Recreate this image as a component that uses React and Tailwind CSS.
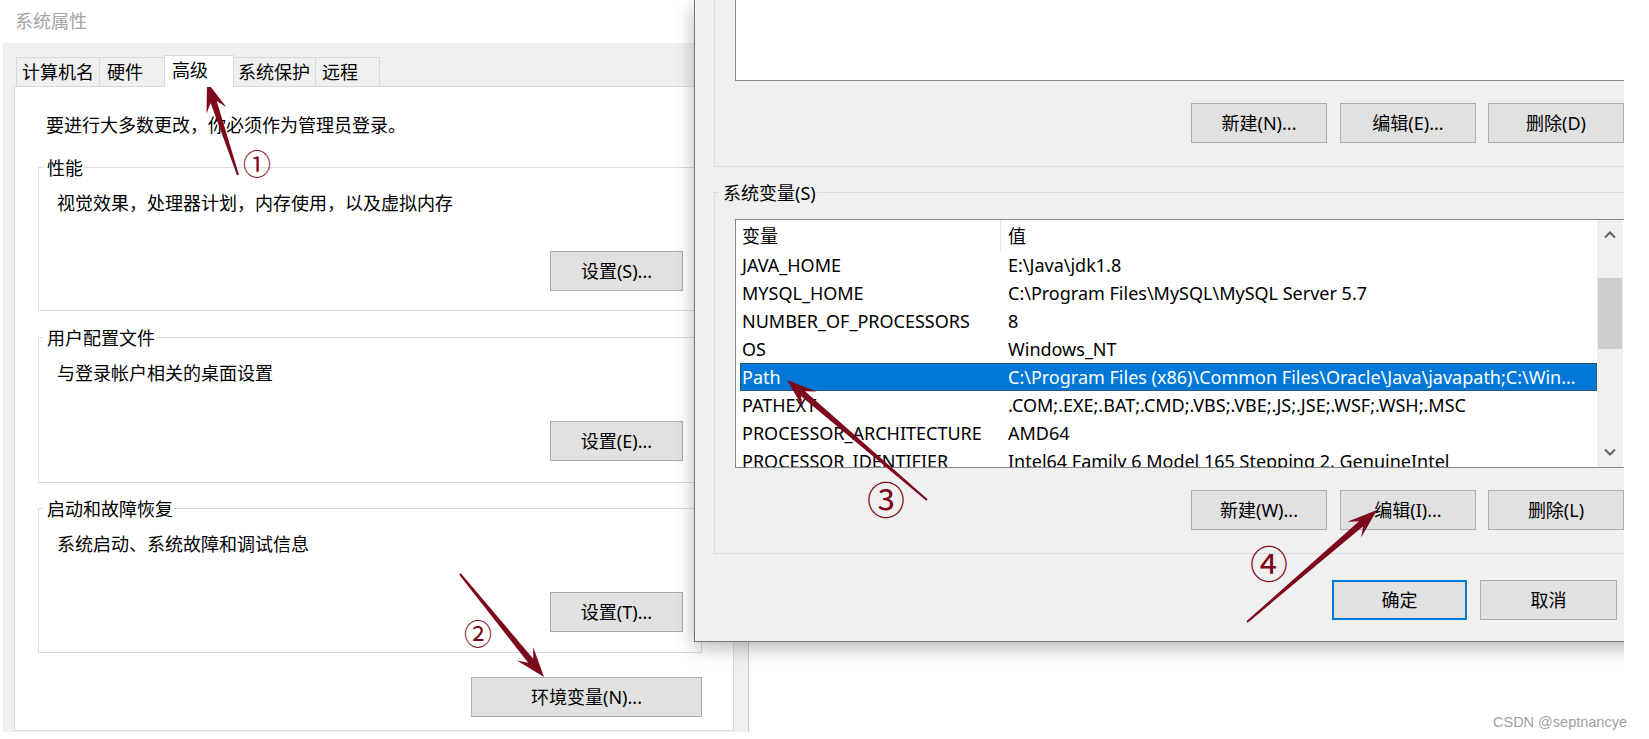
import React from 'react';

const RED = '#7d0a1c';

const sysVars = [
  ['JAVA_HOME', 'E:\\Java\\jdk1.8'],
  ['MYSQL_HOME', 'C:\\Program Files\\MySQL\\MySQL Server 5.7'],
  ['NUMBER_OF_PROCESSORS', '8'],
  ['OS', 'Windows_NT'],
  ['Path', 'C:\\Program Files (x86)\\Common Files\\Oracle\\Java\\javapath;C:\\Win...'],
  ['PATHEXT', '.COM;.EXE;.BAT;.CMD;.VBS;.VBE;.JS;.JSE;.WSF;.WSH;.MSC'],
  ['PROCESSOR_ARCHITECTURE', 'AMD64'],
  ['PROCESSOR_IDENTIFIER', 'Intel64 Family 6 Model 165 Stepping 2, GenuineIntel'],
];

// tail -> tip
const arrows = [
  [238, 175, 207, 82],
  [460, 574, 544, 677],
  [927, 500, 787, 380],
  [1247, 622, 1377, 510],
];

function arrowPoints([x1, y1, x2, y2]) {
  const dx = x2 - x1;
  const dy = y2 - y1;
  const len = Math.hypot(dx, dy);
  const ux = dx / len;
  const uy = dy / len;
  const nx = -uy;
  const ny = ux;
  const head = 30;
  const neck = 21;
  const hw = 10.5;
  const sw = 3.2;
  const pts = [
    [x1 + nx * 1, y1 + ny * 1],
    [x2 - ux * neck + nx * sw, y2 - uy * neck + ny * sw],
    [x2 - ux * head + nx * hw, y2 - uy * head + ny * hw],
    [x2, y2],
    [x2 - ux * head - nx * hw, y2 - uy * head - ny * hw],
    [x2 - ux * neck - nx * sw, y2 - uy * neck - ny * sw],
    [x1 - nx * 1, y1 - ny * 1],
  ];
  return pts.map((p) => p.join(',')).join(' ');
}

function Btn({ children, className = '' }) {
  return (
    <div className={`h-[40px] flex items-center justify-center border border-[#adadad] bg-[#e1e1e1] text-[18px] leading-[24px] text-black ${className}`}>
      {children}
    </div>
  );
}

function GroupBox({ label, text, button, className }) {
  return (
    <div className={`relative ml-[23px] w-[664px] border border-[#dcdcdc] ${className}`}>
      <span className="absolute left-[4px] -top-[12px] bg-white pl-[4px] pr-[1px] leading-[24px]">{label}</span>
      <div className="pl-[18px] pt-[23px] leading-[24px]">{text}</div>
      <div className="flex justify-end pr-[18px] mt-[36px]">
        <Btn className="w-[133px]">{button}</Btn>
      </div>
    </div>
  );
}

function Chevron({ down }) {
  return (
    <svg width="12" height="8" viewBox="0 0 12 8">
      <polyline
        points={down ? '1,1.5 6,6.5 11,1.5' : '1,6.5 6,1.5 11,6.5'}
        fill="none"
        stroke="#606060"
        strokeWidth="2"
      />
    </svg>
  );
}

function LeftWindow() {
  const tabs = [
    { label: '计算机名', w: 'w-[84px]', pl: 'pl-[5px]' },
    { label: '硬件', w: 'w-[66px]', pl: 'pl-[7px]' },
    { label: '高级', w: 'w-[70px]', pl: 'pl-[7px]', active: true },
    { label: '系统保护', w: 'w-[83px]', pl: 'pl-[4px]' },
    { label: '远程', w: 'w-[65px]', pl: 'pl-[6px]' },
  ];
  return (
    <div className="absolute left-0 top-0 w-[749px] h-[732px] flex flex-col text-[18px] text-black">
      <div className="h-[43px] bg-white pl-[15px] pt-[9px] leading-[24px] text-[#a3a3a3]">系统属性</div>
      <div className="flex-1 ml-[3px] bg-[#f0f0f0] border-r border-[#c9c9c9] pl-[11px] pt-[12px]">
        <div className="relative z-10 flex items-end h-[32px] -mb-[1px] pl-[2px]">
          {tabs.map((t, i) =>
            t.active ? (
              <div
                key={t.label}
                className={`-ml-[1px] h-[32px] bg-white border border-b-0 border-[#d9d9d9] flex items-center pb-[3px] ${t.w} ${t.pl}`}
              >
                {t.label}
              </div>
            ) : (
              <div
                key={t.label}
                className={`${i === 0 ? '' : '-ml-[1px]'} h-[29px] mb-[1px] bg-[#f0f0f0] border border-b-0 border-[#d9d9d9] flex items-center ${t.w} ${t.pl}`}
              >
                {t.label}
              </div>
            )
          )}
        </div>
        <div className="w-[720px] h-[645px] bg-white border border-[#d9d9d9]">
          <div className="pl-[31px] pt-[26px] leading-[24px]">要进行大多数更改，你必须作为管理员登录。</div>
          <GroupBox
            className="mt-[30px] h-[144px]"
            label="性能"
            text="视觉效果，处理器计划，内存使用，以及虚拟内存"
            button="设置(S)..."
          />
          <GroupBox
            className="mt-[26px] h-[146px]"
            label="用户配置文件"
            text="与登录帐户相关的桌面设置"
            button="设置(E)..."
          />
          <GroupBox
            className="mt-[25px] h-[145px]"
            label="启动和故障恢复"
            text="系统启动、系统故障和调试信息"
            button="设置(T)..."
          />
          <Btn className="mt-[24px] ml-[456px] w-[231px]">环境变量(N)...</Btn>
        </div>
      </div>
    </div>
  );
}

function RightWindow() {
  return (
    <div className="absolute left-[694px] top-0 w-[960px] h-[642px] bg-[#f0f0f0] border-l border-b border-[#777777] shadow-[0_6px_18px_rgba(0,0,0,0.28)] text-[18px] text-black">
      {/* user variables, top cut off */}
      <div className="ml-[19px] w-[921px] h-[167px] border-l border-r border-b border-[#dcdcdc]">
        <div className="ml-[20px] w-[890px] h-[81px] bg-white border-l border-r border-b border-[#828790]" />
        <div className="flex mt-[22px] ml-[476px]">
          <Btn className="w-[136px]">新建(N)...</Btn>
          <Btn className="ml-[13px] w-[136px]">编辑(E)...</Btn>
          <Btn className="ml-[12px] w-[136px]">删除(D)</Btn>
        </div>
      </div>

      {/* system variables */}
      <div className="relative mt-[25px] ml-[19px] w-[921px] h-[362px] border border-[#dcdcdc]">
        <span className="absolute left-[4px] -top-[12px] bg-[#f0f0f0] pl-[4px] pr-[1px] leading-[24px]">系统变量(S)</span>
        <div className="mt-[26px] ml-[20px] w-[890px] h-[249px] bg-white border border-[#828790] flex">
          <div className="w-[861px] overflow-hidden">
            <div className="flex h-[31px] items-center leading-[24px]">
              <div className="w-[265px] h-full flex items-center pl-[6px] border-r border-[#e5e5e5]">变量</div>
              <div className="pl-[7px]">值</div>
            </div>
            {sysVars.map(([k, v]) => (
              <div
                key={k}
                className={`ml-[4px] w-[857px] h-[28px] flex items-center whitespace-nowrap leading-[24px] ${
                  k === 'Path' ? 'bg-[#0078d7] text-white outline-1 outline-dotted outline-offset-[-1px] outline-[#5a3a1a]' : ''
                }`}
              >
                <div className="w-[260px] shrink-0 pl-[2px]">{k}</div>
                <div className="pl-[8px] overflow-hidden">{v}</div>
              </div>
            ))}
          </div>
          <div className="w-[26px] bg-[#f0f0f0] flex flex-col">
            <div className="h-[30px] flex items-center justify-center">
              <Chevron />
            </div>
            <div className="h-[28px]" />
            <div className="h-[71px] mx-[1px] bg-[#cdcdcd]" />
            <div className="flex-1" />
            <div className="h-[30px] flex items-center justify-center">
              <Chevron down />
            </div>
          </div>
        </div>
        <div className="flex mt-[22px] ml-[476px]">
          <Btn className="w-[136px]">新建(W)...</Btn>
          <Btn className="ml-[13px] w-[136px]">编辑(I)...</Btn>
          <Btn className="ml-[12px] w-[136px]">删除(L)</Btn>
        </div>
      </div>

      <div className="flex mt-[26px] ml-[637px]">
        <div className="w-[135px] h-[40px] flex items-center justify-center border-2 border-[#0078d7] bg-[#e1e1e1] leading-[24px]">确定</div>
        <Btn className="ml-[13px] w-[137px]">取消</Btn>
      </div>
    </div>
  );
}

export default function App() {
  const circled = [
    { ch: '①', x: 'left-[257px]', y: 'top-[163px]', size: 'text-[28px]' },
    { ch: '②', x: 'left-[478px]', y: 'top-[633px]', size: 'text-[28px]' },
    { ch: '③', x: 'left-[886px]', y: 'top-[498px]', size: 'text-[38px]' },
    { ch: '④', x: 'left-[1269px]', y: 'top-[562px]', size: 'text-[38px]' },
  ];
  return (
    <div className="relative w-[1649px] h-[739px] overflow-hidden bg-white font-['Noto_Sans','Noto_Sans_CJK_SC',sans-serif]">
      <div className="relative w-[1624px] h-[739px] overflow-hidden">
        <LeftWindow />
        <RightWindow />
      </div>

      {/* annotations */}
      <svg className="absolute inset-0 pointer-events-none" width="1649" height="739">
        {arrows.map((a, i) => (
          <polygon key={i} points={arrowPoints(a)} fill={RED} />
        ))}
      </svg>
      {circled.map((c) => (
        <span
          key={c.ch}
          className={`absolute -translate-x-1/2 -translate-y-1/2 leading-none text-[#7d0a1c] font-['Noto_Sans_CJK_SC',sans-serif] ${c.x} ${c.y} ${c.size}`}
        >
          {c.ch}
        </span>
      ))}

      <div className="absolute left-[1493px] top-[712px] text-[14.5px] leading-[20px] text-[#a0a0a0] font-['Liberation_Sans',Arial,sans-serif]">
        CSDN @septnancye
      </div>
    </div>
  );
}
